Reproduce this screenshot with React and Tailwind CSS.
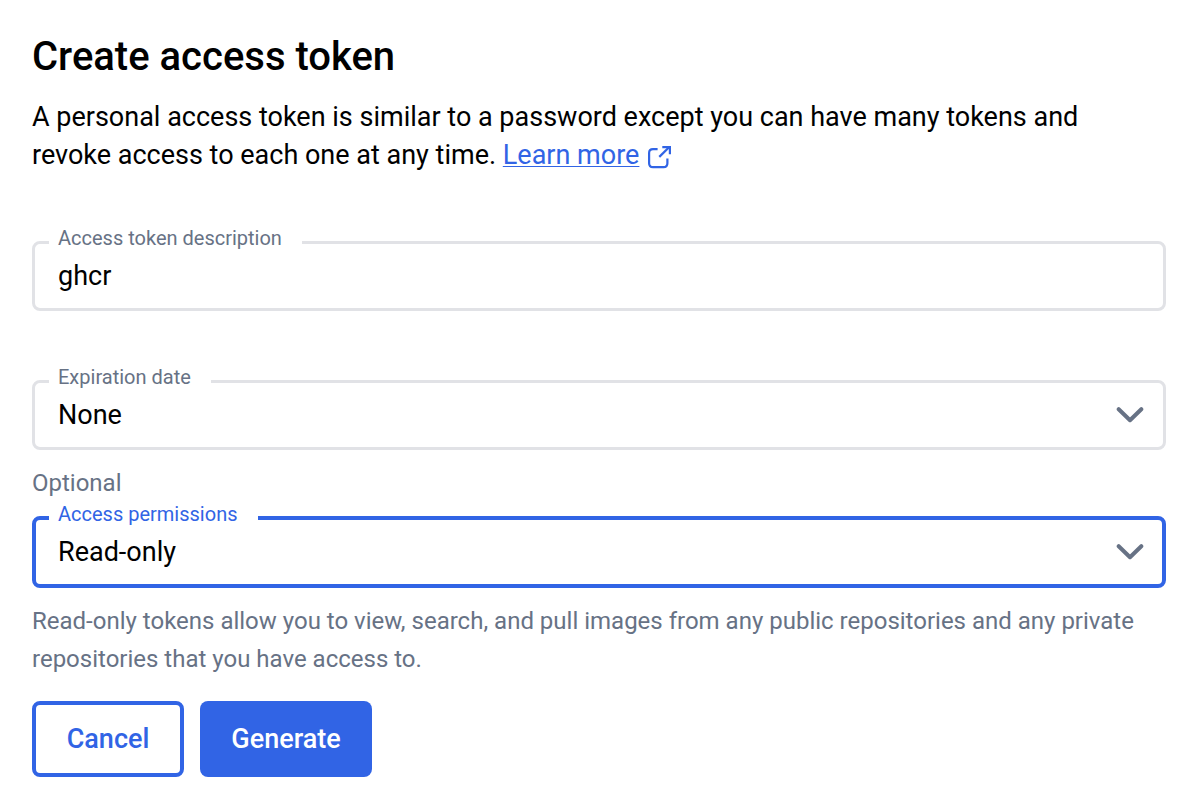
import React from "react";

function ExternalLinkIcon() {
  return (
    <svg
      className="ml-2 inline-block size-6"
      viewBox="0 0 24 24"
      fill="none"
      stroke="currentColor"
      strokeWidth="2.2"
      strokeLinecap="butt"
      strokeLinejoin="round"
      aria-hidden="true"
    >
      <path d="M10.6 4.1H6Q2.1 4.1 2.1 8V18.2Q2.1 22.1 6 22.1H16.5Q20.4 22.1 20.4 18.2V13.5" />
      <path d="M12.3 11.9L22 2.2" />
      <path d="M15.3 2.1H22.9V9.3" strokeLinejoin="miter" />
    </svg>
  );
}

function Chevron() {
  return (
    <svg
      className="pointer-events-none col-start-1 row-start-1 h-4 w-7 self-center justify-self-end text-[#677285]"
      viewBox="0 0 28 16"
      fill="none"
      stroke="currentColor"
      strokeWidth="4"
      strokeLinecap="round"
      strokeLinejoin="round"
      aria-hidden="true"
    >
      <path d="M2.7 2.2L14 13.2L25.3 2.2" />
    </svg>
  );
}

function Field({ id, label, active, children }) {
  return (
    <fieldset
      className={
        active
          ? "min-w-0 rounded-lg border-4 border-[#3164e5] pr-[18px] pl-[13px] text-[#3164e5]"
          : "min-w-0 rounded-lg border-3 border-[#e1e2e6] pr-[19px] pl-[14px] text-[#677285]"
      }
    >
      <legend className="pr-5 pb-2 pl-[9px] text-[20px] leading-5">
        <label htmlFor={id}>{label}</label>
      </legend>
      <div className="grid h-[52px] pt-0.5 pb-3.5">{children}</div>
    </fieldset>
  );
}

const control =
  "col-start-1 row-start-1 h-9 w-full appearance-none bg-transparent px-[9px] text-[27px] leading-9 text-black outline-none";

export default function App() {
  return (
    <main className="bg-white pt-[33px] pr-[34px] pb-6 pl-8 font-['Roboto',sans-serif] text-black">
      <h1 className="text-[40px] leading-12 font-medium">Create access token</h1>
      <p className="mt-[17px] text-[27px] leading-[38px]">
        A personal access token is similar to a password except you can have many tokens and
        <br />
        revoke access to each one at any time.{" "}
        <a href="#learn-more" className="text-[#3164e5]">
          <span className="underline decoration-1 underline-offset-2">Learn more</span>
          <ExternalLinkIcon />
        </a>
      </p>
      <form className="mt-[54px]" onSubmit={(e) => e.preventDefault()}>
        <Field id="description" label="Access token description">
          <input id="description" type="text" defaultValue="ghcr" className={control} />
        </Field>
        <div className="mt-14">
          <Field id="expiration" label="Expiration date">
            <select id="expiration" className={control}>
              <option>None</option>
            </select>
            <Chevron />
          </Field>
        </div>
        <p className="mt-3.5 mb-0.5 text-[24px] leading-[38px] text-[#677285]">Optional</p>
        <Field id="permissions" label="Access permissions" active>
          <select id="permissions" className={control}>
            <option>Read-only</option>
          </select>
          <Chevron />
        </Field>
        <p className="mt-3.5 text-[24px] leading-[38px] text-[#677285]">
          Read-only tokens allow you to view, search, and pull images from any public repositories and any private
          <br />
          repositories that you have access to.
        </p>
        <div className="mt-[23px] flex gap-4 text-[27px] leading-9 font-medium">
          <button
            type="button"
            className="h-19 min-w-38 rounded-lg border-4 border-[#3164e5] px-6 text-[#3164e5]"
          >
            Cancel
          </button>
          <button type="submit" className="h-19 min-w-43 rounded-lg bg-[#3164e5] px-6 text-white">
            Generate
          </button>
        </div>
      </form>
    </main>
  );
}
